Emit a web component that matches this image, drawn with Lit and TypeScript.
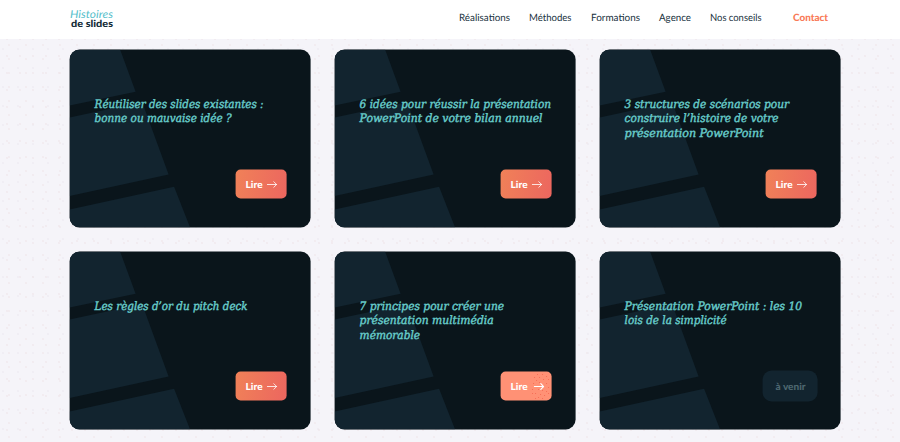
import { LitElement, html, css, svg } from "lit"
import { customElement, property } from "lit/decorators.js"

interface Line {
    text: string
    width: number
}

interface Article {
    lines: Line[]
    state: "ready" | "hover" | "soon"
}

const ARTICLES: Article[] = [
    {
        lines: [
            { text: "Réutiliser des slides existantes :", width: 169 },
            { text: "bonne ou mauvaise idée ?", width: 137 },
        ],
        state: "ready",
    },
    {
        lines: [
            { text: "6 idées pour réussir la présentation", width: 191.5 },
            { text: "PowerPoint de votre bilan annuel", width: 183 },
        ],
        state: "ready",
    },
    {
        lines: [
            { text: "3 structures de scénarios pour", width: 164.5 },
            { text: "construire l’histoire de votre", width: 154 },
            { text: "présentation PowerPoint", width: 139 },
        ],
        state: "ready",
    },
    {
        lines: [{ text: "Les règles d’or du pitch deck", width: 153 }],
        state: "ready",
    },
    {
        lines: [
            { text: "7 principes pour créer une", width: 144.5 },
            { text: "présentation multimédia", width: 134 },
            { text: "mémorable", width: 60.5 },
        ],
        state: "hover",
    },
    {
        lines: [
            { text: "Présentation PowerPoint : les 10", width: 177.5 },
            { text: "lois de la simplicité", width: 102 },
        ],
        state: "soon",
    },
]

const LINKS: Line[] = [
    { text: "Réalisations", width: 51 },
    { text: "Méthodes", width: 42.5 },
    { text: "Formations", width: 49 },
    { text: "Agence", width: 32 },
    { text: "Nos conseils", width: 51.5 },
]

// One line of text set to an exact measure
@customElement("fit-line")
export class FitLine extends LitElement {
    @property() text = ""
    @property({ type: Number }) width = 0
    @property({ type: Number }) height = 14
    @property({ type: Number }) baseline = 11

    static styles = css`
    :host {
        display: block;
        flex: none;
    }
    svg {
        display: block;
        overflow: visible;
    }
    text {
        fill: currentColor;
        stroke: currentColor;
        stroke-width: var(--line-stroke, 0);
        text-rendering: geometricPrecision;
    }
    `

    render() {
        return html`
        <svg width=${this.width} height=${this.height}>
            <text x="0" y=${this.baseline} textLength=${this.width} lengthAdjust="spacingAndGlyphs">${this.text}</text>
        </svg>
        `
    }
}

@customElement("article-card")
export class ArticleCard extends LitElement {
    @property({ attribute: false }) article!: Article

    static styles = css`
    :host {
        display: block;
    }
    .card {
        display: grid;
        height: 178px;
        border-radius: 10px;
        overflow: hidden;
        background: #0a151b;
    }
    .shapes,
    .content {
        grid-area: 1 / 1;
    }
    .shapes {
        fill: #12242f;
    }
    .content {
        display: flex;
        flex-direction: column;
        justify-content: space-between;
        padding: 47.5px 24px 29px;
    }
    .title {
        margin: 0 0 0 0.8px;
        color: #68cdcb;
        font: italic 400 11.6px "DejaVu Serif Condensed", "DejaVu Serif", serif;
        --line-stroke: 0.4px;
    }
    .button {
        display: flex;
        align-items: center;
        align-self: flex-end;
        gap: 4px;
        box-sizing: border-box;
        width: 51px;
        height: 29px;
        padding-left: 10px;
        border-radius: 5px;
        color: #fff;
        background: linear-gradient(100deg, #f08158, #ec665f);
        font: 900 9.8px Lato, sans-serif;
        text-decoration: none;
    }
    .button.hover {
        gap: 6px;
        background: #ff9175;
    }
    .button.hover .dots {
        display: block;
    }
    .dots {
        display: none;
        position: absolute;
        fill: #f2664f;
        margin-left: 20px;
    }
    .arrow {
        position: relative;
        fill: none;
        stroke: currentColor;
        stroke-width: 0.8;
        stroke-linecap: round;
        stroke-linejoin: round;
    }
    .button.hover .arrow {
        stroke-width: 1.1;
    }
    .button.soon {
        width: 55px;
        height: 31px;
        margin: 0 -1px -1px 0;
        padding-left: 13px;
        border-radius: 9px;
        background: #12242f;
        color: #4d6770;
    }
    `

    _bouton() {
        const { state } = this.article
        if (state === "soon") {
            return html`<span class="button soon"><fit-line text="à venir" width="30" height="14" baseline="10.5"></fit-line></span>`
        }
        return html`
        <a class="button ${state}" href="#">
            <svg class="dots" width="21" height="29">
                ${[[7, 3], [12, 3], [16, 5], [4, 6], [9, 6], [13, 8], [18, 8], [6, 9], [3, 12], [9, 11], [16, 12], [13, 14], [18, 16], [2, 18], [8, 18], [12, 19], [16, 20], [5, 22], [2, 22], [10, 23], [14, 24], [18, 22], [8, 26], [5, 27], [12, 27]].map(
                    ([x, y]) => svg`<circle cx=${x} cy=${y} r="0.55"></circle>`
                )}
            </svg>
            <fit-line text="Lire" width="17" height="14" baseline="10.5"></fit-line>
            <svg class="arrow" width="11" height="8" viewBox="0 0 11 8">
                <path d="M.7 4H10M7.2 1.2L10 4L7.2 6.8"></path>
            </svg>
        </a>
        `
    }

    render() {
        return html`
        <article class="card">
            <svg class="shapes" width="241" height="178">
                <path d="M0 0H50.5L66 42.3L0 56Z"></path>
                <path d="M0 68L72.5 52.5L99 125L0 146.5Z"></path>
                <path d="M0 160L104.5 137.3L120.5 178H0Z"></path>
            </svg>
            <div class="content">
                <h2 class="title">
                    ${this.article.lines.map(
                        (line) => html`<fit-line text=${line.text} width=${line.width} height="14.5" baseline="10.9"></fit-line>`
                    )}
                </h2>
                ${this._bouton()}
            </div>
        </article>
        `
    }
}

@customElement("app-root")
export class AppRoot extends LitElement {
    static styles = css`
    :host {
        display: block;
        height: 442px;
        overflow: hidden;
        background-color: #f5f4f9;
        background-image:
            radial-gradient(circle at 7px 5px, #eee6e9 0.5px, transparent 1px),
            radial-gradient(circle at 3px 11px, #eceaf0 0.5px, transparent 1px),
            radial-gradient(circle at 9px 3px, #efe7e9 0.5px, transparent 1px);
        background-size: 13px 17px, 15px 19px, 17px 14px;
        font-family: Lato, sans-serif;
    }
    .header {
        display: flex;
        justify-content: space-between;
        box-sizing: border-box;
        height: 39px;
        padding: 0 72px 0 70px;
        background: #fff;
    }
    .logo {
        padding-top: 9px;
    }
    .logo-top {
        color: #55c0cb;
        font: italic 400 11px Lato, sans-serif;
    }
    .logo-bottom {
        color: #132c38;
        font: 900 9.8px Lato, sans-serif;
        margin-left: 1px;
    }
    .nav {
        display: flex;
        align-items: flex-start;
        gap: 19.2px;
        padding-top: 10px;
        color: #17313d;
        font-size: 10px;
    }
    .contact {
        margin-left: 12px;
        color: #f97a58;
        font-weight: 900;
    }
    .grid {
        display: grid;
        grid-template-columns: repeat(3, 241px);
        gap: 24.3px 24px;
        padding: 11px 0 0 70px;
        transform: translate(-0.4px, -0.5px);
    }
    `

    render() {
        return html`
        <header class="header">
            <div class="logo">
                <fit-line class="logo-top" text="Histoires" width="43" height="9" baseline="9"></fit-line>
                <fit-line class="logo-bottom" text="de slides" width="42" height="10" baseline="9"></fit-line>
            </div>
            <nav class="nav">
                ${LINKS.map((link) => html`<fit-line text=${link.text} width=${link.width} baseline="10.6"></fit-line>`)}
                <fit-line class="contact" text="Contact" width="35" baseline="10.6"></fit-line>
            </nav>
        </header>
        <main class="grid">
            ${ARTICLES.map((article) => html`<article-card .article=${article}></article-card>`)}
        </main>
        `
    }
}
